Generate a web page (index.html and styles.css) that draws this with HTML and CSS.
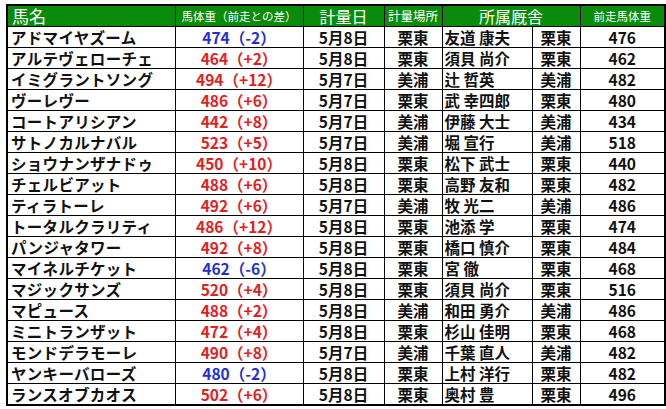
FILE: index.html
```html
<!DOCTYPE html>
<html lang="ja">
<head>
<meta charset="utf-8">
<link rel="stylesheet" href="styles.css">
</head>
<body>
<div class="wrap">
<table class="sheet">
<colgroup>
<col class="c1"><col class="c2"><col class="c3"><col class="c4"><col class="c5"><col class="c6"><col class="c7">
</colgroup>
<thead>
<tr>
<th class="h-name">馬名</th>
<th class="h-small">馬体重（前走との差）</th>
<th class="h-big">計量日</th>
<th class="h-mid">計量場所</th>
<th class="h-big" colspan="2">所属厩舎</th>
<th class="h-small">前走馬体重</th>
</tr>
</thead>
<tbody>
<tr><td class="name">アドマイヤズーム</td><td class="wt minus">474（-2）</td><td class="ctr">5月8日</td><td class="ctr">栗東</td><td class="tr">友道 康夫</td><td class="ctr">栗東</td><td class="ctr">476</td></tr>
<tr><td class="name">アルテヴェローチェ</td><td class="wt plus">464（+2）</td><td class="ctr">5月8日</td><td class="ctr">栗東</td><td class="tr">須貝 尚介</td><td class="ctr">栗東</td><td class="ctr">462</td></tr>
<tr><td class="name">イミグラントソング</td><td class="wt plus">494（+12）</td><td class="ctr">5月7日</td><td class="ctr">美浦</td><td class="tr">辻 哲英</td><td class="ctr">美浦</td><td class="ctr">482</td></tr>
<tr><td class="name">ヴーレヴー</td><td class="wt plus">486（+6）</td><td class="ctr">5月7日</td><td class="ctr">栗東</td><td class="tr">武 幸四郎</td><td class="ctr">栗東</td><td class="ctr">480</td></tr>
<tr><td class="name">コートアリシアン</td><td class="wt plus">442（+8）</td><td class="ctr">5月7日</td><td class="ctr">美浦</td><td class="tr">伊藤 大士</td><td class="ctr">美浦</td><td class="ctr">434</td></tr>
<tr><td class="name">サトノカルナバル</td><td class="wt plus">523（+5）</td><td class="ctr">5月7日</td><td class="ctr">美浦</td><td class="tr">堀 宣行</td><td class="ctr">美浦</td><td class="ctr">518</td></tr>
<tr><td class="name">ショウナンザナドゥ</td><td class="wt plus">450（+10）</td><td class="ctr">5月8日</td><td class="ctr">栗東</td><td class="tr">松下 武士</td><td class="ctr">栗東</td><td class="ctr">440</td></tr>
<tr><td class="name">チェルビアット</td><td class="wt plus">488（+6）</td><td class="ctr">5月8日</td><td class="ctr">栗東</td><td class="tr">高野 友和</td><td class="ctr">栗東</td><td class="ctr">482</td></tr>
<tr><td class="name">ティラトーレ</td><td class="wt plus">492（+6）</td><td class="ctr">5月7日</td><td class="ctr">美浦</td><td class="tr">牧 光二</td><td class="ctr">美浦</td><td class="ctr">486</td></tr>
<tr><td class="name">トータルクラリティ</td><td class="wt plus">486（+12）</td><td class="ctr">5月8日</td><td class="ctr">栗東</td><td class="tr">池添 学</td><td class="ctr">栗東</td><td class="ctr">474</td></tr>
<tr><td class="name">パンジャタワー</td><td class="wt plus">492（+8）</td><td class="ctr">5月8日</td><td class="ctr">栗東</td><td class="tr">橋口 慎介</td><td class="ctr">栗東</td><td class="ctr">484</td></tr>
<tr><td class="name">マイネルチケット</td><td class="wt minus">462（-6）</td><td class="ctr">5月8日</td><td class="ctr">栗東</td><td class="tr">宮 徹</td><td class="ctr">栗東</td><td class="ctr">468</td></tr>
<tr><td class="name">マジックサンズ</td><td class="wt plus">520（+4）</td><td class="ctr">5月8日</td><td class="ctr">栗東</td><td class="tr">須貝 尚介</td><td class="ctr">栗東</td><td class="ctr">516</td></tr>
<tr><td class="name">マピュース</td><td class="wt plus">488（+2）</td><td class="ctr">5月8日</td><td class="ctr">美浦</td><td class="tr">和田 勇介</td><td class="ctr">美浦</td><td class="ctr">486</td></tr>
<tr><td class="name">ミニトランザット</td><td class="wt plus">472（+4）</td><td class="ctr">5月8日</td><td class="ctr">栗東</td><td class="tr">杉山 佳明</td><td class="ctr">栗東</td><td class="ctr">468</td></tr>
<tr><td class="name">モンドデラモーレ</td><td class="wt plus">490（+8）</td><td class="ctr">5月7日</td><td class="ctr">美浦</td><td class="tr">千葉 直人</td><td class="ctr">美浦</td><td class="ctr">482</td></tr>
<tr><td class="name">ヤンキーバローズ</td><td class="wt minus">480（-2）</td><td class="ctr">5月8日</td><td class="ctr">栗東</td><td class="tr">上村 洋行</td><td class="ctr">栗東</td><td class="ctr">482</td></tr>
<tr><td class="name">ランスオブカオス</td><td class="wt plus">502（+6）</td><td class="ctr">5月8日</td><td class="ctr">栗東</td><td class="tr">奥村 豊</td><td class="ctr">栗東</td><td class="ctr">496</td></tr>
</tbody>
</table>
</div>
</body>
</html>
```

FILE: styles.css
```css
html, body {
  margin: 0;
  padding: 0;
  background: #ffffff;
}

.wrap {
  padding: 4px 0 0 6px;
}

.sheet {
  border-collapse: collapse;
  table-layout: fixed;
  width: 658px;
  font-family: "Noto Sans CJK JP", "Noto Sans", sans-serif;
  border: 2px solid #000;
}

.c1 { width: 168px; }
.c2 { width: 128px; }
.c3 { width: 81px; }
.c4 { width: 58px; }
.c5 { width: 90px; }
.c6 { width: 48px; }
.c7 { width: 85px; }

.sheet th,
.sheet td {
  border: 1px solid #000;
  padding: 0;
  height: 20px;
  line-height: 20px;
  white-space: nowrap;
}

.sheet th {
  background: #0a8c0a;
  color: #ffffff;
  font-weight: 400;
  text-align: center;
}

.h-name {
  text-align: left !important;
  padding-left: 4px !important;
  font-size: 17px;
}

.h-big { font-size: 16px; }
.h-mid { font-size: 12.5px; }
.h-small { font-size: 11.5px; }

.sheet td {
  font-size: 15.5px;
  font-weight: 700;
  color: #111;
}

.name {
  padding-left: 3px !important;
  letter-spacing: 0.3px;
}

.tr {
  padding-left: 2px !important;
}

.ctr,
.wt {
  text-align: center;
}

.plus { color: #e41e1e !important; }
.minus { color: #1f2fd6 !important; }
```
